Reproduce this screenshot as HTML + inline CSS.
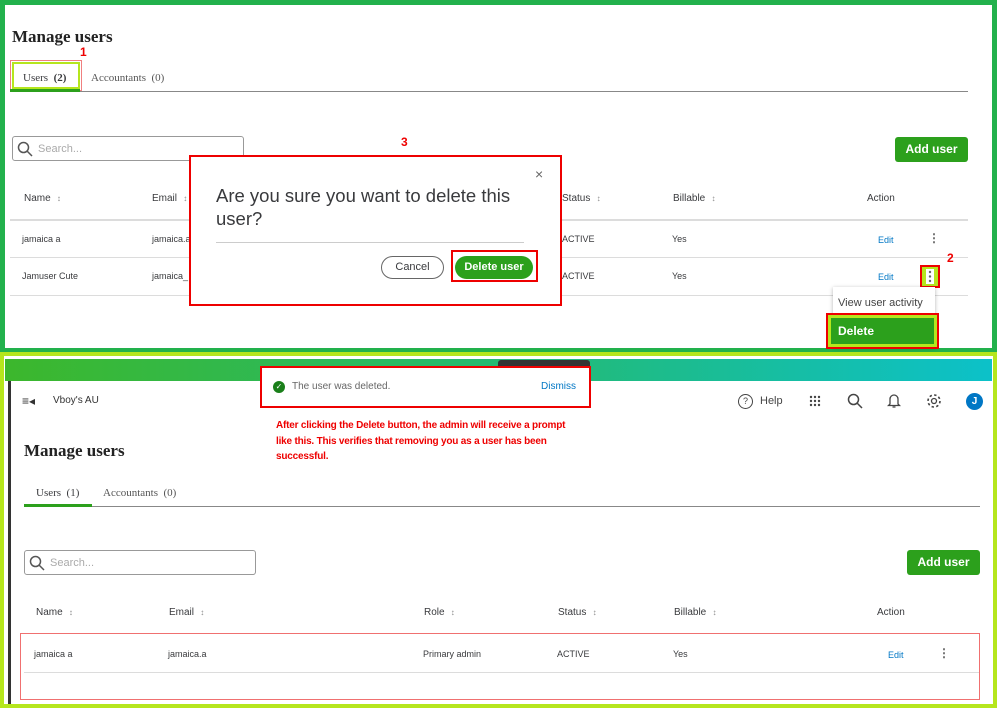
<!DOCTYPE html><html><head><meta charset="utf-8"><style>
*{margin:0;padding:0;box-sizing:border-box}
body{width:999px;height:708px;position:relative;background:#fff;font-family:"Liberation Sans",sans-serif;overflow:hidden;color:#393a3d}
.a{position:absolute;white-space:nowrap}
.serif{font-family:"Liberation Serif",serif}
.s{font-size:10px;color:#393a3d}
.h{font-size:10px;color:#393a3d}
.h:after{content:" \2195";font-size:8px;color:#888;margin-left:4px}
.ln{position:absolute;height:1px;background:#dcdcdc}
.btn{position:absolute;background:#2ca01c;color:#fff;font-weight:bold;font-size:12px;border-radius:3px;text-align:center}
.edit{font-size:9px;color:#0077c5}
.keb{font-size:12px;color:#666;font-weight:bold}
.red{color:#e00;font-weight:bold}
</style></head><body>
<div class="a" style="left:0;top:0;width:997px;height:353px;border:5px solid #22b14c"></div>
<div class="a serif" style="left:12px;top:27px;font-size:17px;font-weight:bold;color:#222">Manage users</div>
<div class="a" style="left:10px;top:60px;width:72px;height:31px;border:1px solid #f08080"></div>
<div class="a" style="left:12px;top:62px;width:68px;height:27px;border:2px solid #b5e61d"></div>
<div class="a red" style="left:80px;top:45px;font-size:12px">1</div>
<div class="a serif" style="left:23px;top:72px;font-size:11px">Users &nbsp;<b>(2)</b></div>
<div class="a serif" style="left:91px;top:72px;font-size:11px;color:#555">Accountants &nbsp;(0)</div>
<div class="a" style="left:10px;top:91px;width:958px;height:1px;background:#888"></div>
<div class="a" style="left:10px;top:89px;width:70px;height:3px;background:#2ca01c"></div>
<div class="a" style="left:12px;top:136px;width:232px;height:25px;border:1px solid #999;border-radius:3px"></div>
<svg class="a" style="left:17px;top:141px" width="16" height="16"><circle cx="6.5" cy="6.5" r="5" fill="none" stroke="#555" stroke-width="1.5"/><path d="M10 10l5 5" stroke="#555" stroke-width="1.5"/></svg>
<div class="a" style="left:38px;top:143px;font-size:11px;color:#aaa">Search...</div>
<div class="btn" style="left:895px;top:137px;width:73px;height:25px;line-height:25px">Add user</div>
<div class="a h" style="left:24px;top:193px">Name</div>
<div class="a h" style="left:152px;top:193px">Email</div>
<div class="a h" style="left:562px;top:193px">Status</div>
<div class="a h" style="left:673px;top:193px">Billable</div>
<div class="a s" style="left:867px;top:193px">Action</div>
<div class="ln" style="left:10px;top:219px;width:958px;height:2px"></div>
<div class="a s" style="left:22px;top:234px;font-size:9px">jamaica a</div>
<div class="a s" style="left:152px;top:234px;font-size:9px">jamaica.a</div>
<div class="a s" style="left:562px;top:234px;font-size:9px">ACTIVE</div>
<div class="a s" style="left:672px;top:234px;font-size:9px">Yes</div>
<div class="a edit" style="left:878px;top:235px">Edit</div>
<div class="a keb" style="left:928px;top:231px">⋮</div>
<div class="ln" style="left:10px;top:257px;width:958px"></div>
<div class="a s" style="left:22px;top:271px;font-size:9px">Jamuser Cute</div>
<div class="a s" style="left:152px;top:271px;font-size:9px">jamaica_</div>
<div class="a s" style="left:562px;top:271px;font-size:9px">ACTIVE</div>
<div class="a s" style="left:672px;top:271px;font-size:9px">Yes</div>
<div class="a edit" style="left:878px;top:272px">Edit</div>
<div class="ln" style="left:10px;top:295px;width:958px"></div>
<div class="a" style="left:920px;top:265px;width:20px;height:23px;border:2px solid #e00;background:#b5e61d"></div>
<div class="a" style="left:926px;top:269px;width:8px;height:15px;background:#fff"></div>
<svg class="a" style="left:926px;top:269px" width="8" height="15"><g fill="#666"><circle cx="4" cy="3" r="1.2"/><circle cx="4" cy="7.5" r="1.2"/><circle cx="4" cy="12" r="1.2"/></g></svg>
<div class="a red" style="left:947px;top:251px;font-size:12px">2</div>
<div class="a" style="left:833px;top:287px;width:102px;height:60px;background:#fff;box-shadow:0 1px 4px rgba(0,0,0,.3)"></div>
<div class="a" style="left:838px;top:297px;font-size:11px;color:#444">View user activity</div>
<div class="a" style="left:826px;top:313px;width:113px;height:36px;border:2px solid #e00;background:#b5e61d"></div>
<div class="a" style="left:831px;top:318px;width:103px;height:26px;background:#2ca01c;color:#fff;font-weight:bold;font-size:12px;line-height:26px;padding-left:7px">Delete</div>
<div class="a red" style="left:401px;top:135px;font-size:12px">3</div>
<div class="a" style="left:189px;top:155px;width:373px;height:151px;border:2px solid #e00;background:#fff"></div>
<div class="a" style="left:535px;top:166px;font-size:14px;color:#666">×</div>
<div class="a" style="left:216px;top:184px;font-size:18.5px;color:#393a3d;line-height:23px;white-space:normal;width:320px">Are you sure you want to delete this user?</div>
<div class="ln" style="left:216px;top:242px;width:308px;background:#ccc"></div>
<div class="a" style="left:381px;top:256px;width:63px;height:23px;border:1px solid #666;border-radius:12px;font-size:11px;text-align:center;line-height:21px">Cancel</div>
<div class="a" style="left:451px;top:250px;width:87px;height:32px;border:2px solid #e00"></div>
<div class="btn" style="left:455px;top:256px;width:78px;height:23px;line-height:23px;border-radius:12px;font-size:11px">Delete user</div>
<div class="a" style="left:0;top:352px;width:997px;height:356px;border:4px solid #b5e61d"></div>
<div class="a" style="left:5px;top:359px;width:987px;height:22px;background:linear-gradient(90deg,#3cb72c,#20bb80 60%,#0cc1c9)"></div>
<div class="a" style="left:8px;top:381px;width:3px;height:323px;background:#333"></div>
<div class="a" style="left:498px;top:360px;width:92px;height:6px;background:#333;border-radius:3px 3px 0 0"></div>
<div class="a" style="left:260px;top:366px;width:331px;height:42px;border:2px solid #e00;background:#fff"></div>
<div class="a" style="left:273px;top:381px;width:12px;height:12px;border-radius:50%;background:#1a7f1a;color:#fff;font-size:8px;text-align:center;line-height:12px">✓</div>
<div class="a" style="left:292px;top:381px;font-size:10px;color:#666">The user was deleted.</div>
<div class="a" style="left:541px;top:381px;font-size:10px;color:#0077c5">Dismiss</div>
<div class="a" style="left:22px;top:394px;font-size:12px;color:#333">≡◂</div>
<div class="a" style="left:53px;top:395px;font-size:10px;color:#333">Vboy's AU</div>
<div class="a" style="left:738px;top:394px;width:15px;height:15px;border:1.5px solid #444;border-radius:50%;font-size:9px;text-align:center;line-height:12px;color:#444">?</div>
<div class="a" style="left:760px;top:395px;font-size:11px;color:#444">Help</div>
<svg class="a" style="left:809px;top:395px" width="12" height="12"><g fill="#444"><circle cx="2" cy="2" r="1.2"/><circle cx="6" cy="2" r="1.2"/><circle cx="10" cy="2" r="1.2"/><circle cx="2" cy="6" r="1.2"/><circle cx="6" cy="6" r="1.2"/><circle cx="10" cy="6" r="1.2"/><circle cx="2" cy="10" r="1.2"/><circle cx="6" cy="10" r="1.2"/><circle cx="10" cy="10" r="1.2"/></g></svg>
<svg class="a" style="left:847px;top:393px" width="16" height="16"><circle cx="6.5" cy="6.5" r="5" fill="none" stroke="#444" stroke-width="1.5"/><path d="M10 10l5 5" stroke="#444" stroke-width="1.5"/></svg>
<svg class="a" style="left:887px;top:393px" width="14" height="16"><path d="M3 11V6a4 4 0 018 0v5l1.5 1.5h-11z M5.5 14h3" fill="none" stroke="#444" stroke-width="1.3"/></svg>
<svg class="a" style="left:926px;top:393px" width="16" height="16"><circle cx="8" cy="8" r="2.5" fill="none" stroke="#444" stroke-width="1.3"/><circle cx="8" cy="8" r="6" fill="none" stroke="#444" stroke-width="1.6" stroke-dasharray="2.4 2.3"/></svg>
<div class="a" style="left:966px;top:393px;width:17px;height:17px;border-radius:50%;background:#0077c5;color:#fff;font-size:10px;font-weight:bold;text-align:center;line-height:17px">J</div>
<div class="a red" style="left:276px;top:418px;font-size:10px;line-height:15.5px;white-space:normal;width:300px;letter-spacing:-0.2px">After clicking the Delete button, the admin will receive a prompt like this. This verifies that removing you as a user has been successful.</div>
<div class="a serif" style="left:24px;top:441px;font-size:17px;font-weight:bold;color:#222">Manage users</div>
<div class="a serif" style="left:36px;top:487px;font-size:11px">Users &nbsp;(1)</div>
<div class="a serif" style="left:103px;top:487px;font-size:11px;color:#555">Accountants &nbsp;(0)</div>
<div class="a" style="left:24px;top:506px;width:956px;height:1px;background:#888"></div>
<div class="a" style="left:24px;top:504px;width:68px;height:3px;background:#2ca01c"></div>
<div class="a" style="left:24px;top:550px;width:232px;height:25px;border:1px solid #999;border-radius:3px"></div>
<svg class="a" style="left:29px;top:555px" width="16" height="16"><circle cx="6.5" cy="6.5" r="5" fill="none" stroke="#555" stroke-width="1.5"/><path d="M10 10l5 5" stroke="#555" stroke-width="1.5"/></svg>
<div class="a" style="left:50px;top:557px;font-size:11px;color:#aaa">Search...</div>
<div class="btn" style="left:907px;top:550px;width:73px;height:25px;line-height:25px">Add user</div>
<div class="a h" style="left:36px;top:607px">Name</div>
<div class="a h" style="left:169px;top:607px">Email</div>
<div class="a h" style="left:424px;top:607px">Role</div>
<div class="a h" style="left:558px;top:607px">Status</div>
<div class="a h" style="left:674px;top:607px">Billable</div>
<div class="a s" style="left:877px;top:607px">Action</div>
<div class="a" style="left:20px;top:633px;width:960px;height:67px;border:1px solid #f07070"></div>
<div class="a s" style="left:34px;top:649px;font-size:9px">jamaica a</div>
<div class="a s" style="left:168px;top:649px;font-size:9px">jamaica.a</div>
<div class="a s" style="left:423px;top:649px;font-size:9px">Primary admin</div>
<div class="a s" style="left:557px;top:649px;font-size:9px">ACTIVE</div>
<div class="a s" style="left:673px;top:649px;font-size:9px">Yes</div>
<div class="a edit" style="left:888px;top:650px">Edit</div>
<div class="a keb" style="left:938px;top:646px">⋮</div>
<div class="ln" style="left:24px;top:672px;width:955px"></div>
</body></html>
